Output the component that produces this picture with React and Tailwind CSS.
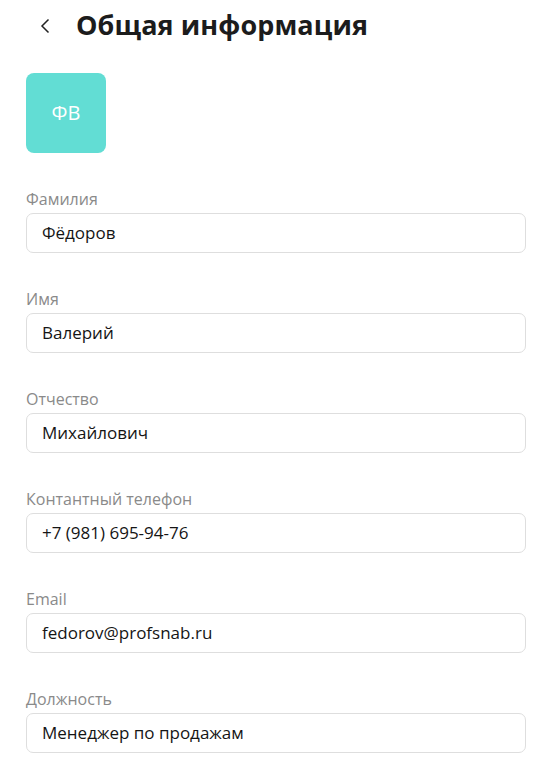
import React from "react";

const fields = [
  ["Фамилия", "Фёдоров"],
  ["Имя", "Валерий"],
  ["Отчество", "Михайлович"],
  ["Контантный телефон", "+7 (981) 695-94-76"],
  ["Email", "fedorov@profsnab.ru"],
  ["Должность", "Менеджер по продажам"],
];

export default function App() {
  return (
    <div
      className="w-[548px] h-[769px] bg-white overflow-hidden"
      style={{ fontFamily: '"Open Sans", "Noto Sans", sans-serif' }}
    >
      <div className="flex items-center h-[50px] pl-[40px]">
        <svg width="10" height="16" viewBox="0 0 10 16" className="mt-[1px]">
          <path d="M8.5 1.5 L2 8 L8.5 14.5" fill="none" stroke="#222" strokeWidth="1.5" />
        </svg>
        <h1 className="ml-[26px] text-[27px] font-bold text-[#1c1c1c] tracking-[0.1px]">
          Общая информация
        </h1>
      </div>
      <div className="px-[26px] pt-[23px]">
        <div className="w-[80px] h-[80px] rounded-[8px] bg-[#62ddd4] flex items-center justify-center text-white text-[20px]">
          ФВ
        </div>
        <div className="mt-[35px] flex flex-col gap-[35px]">
          {fields.map(([label, value]) => (
            <div key={label} className="flex flex-col">
              <div className="h-[22px] leading-[22px] text-[16px] text-[#8a8a8a] mb-[3px]">
                {label}
              </div>
              <div className="h-[40px] w-[500px] rounded-[7px] border border-[#dedede] flex items-center px-[15px] text-[17px] text-[#151515]">
                {value}
              </div>
            </div>
          ))}
        </div>
      </div>
    </div>
  );
}
